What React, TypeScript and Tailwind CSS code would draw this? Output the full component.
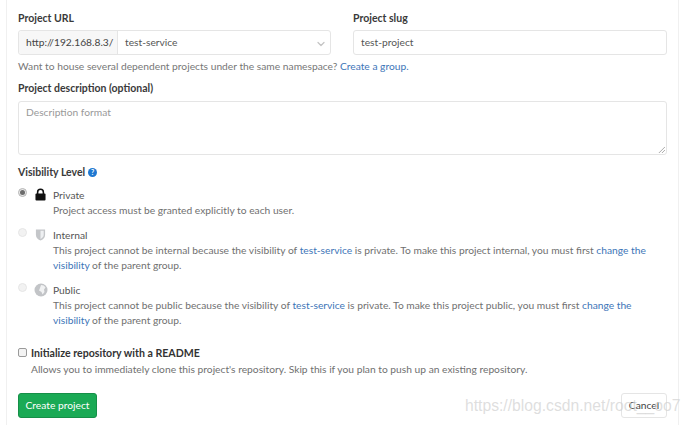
import React from "react";
import { ChevronDown } from "lucide-react";

function LockIcon() {
  return (
    <svg viewBox="0 0 12 13" className="w-[11px] h-[13px]">
      <path d="M2 6V4a4 4 0 0 1 8 0v2H8.300V4a2.300 2.300 0 0 0-4.600 0v2z" fill="#111" />
      <rect x="0.5" y="5.500" width="11" height="7.500" rx="1" fill="#111" />
    </svg>
  );
}

function ShieldIcon() {
  return (
    <svg viewBox="0 0 12 13" className="w-[11px] h-[13px]">
      <path d="M1 1h10v6c0 3-2.500 5-5 6-2.500-1-5-3-5-6z" fill="#c4c6c9" />
      <path d="M6 2.500h3.500V7c0 2-1.800 3.400-3.500 4.300z" fill="#eef0f2" />
    </svg>
  );
}

function GlobeIcon() {
  return (
    <svg viewBox="0 0 14 14" className="w-[14px] h-[14px] -ml-[1px]">
      <circle cx="7" cy="7" r="6.500" fill="#c2c4c7" />
      <path d="M7 2c2 0 3.500.8 4.500 2.500L10 6.500l.5 2.500-2 2.500-1-2.500L5 7.500 6 5z" fill="#f1f2f3" />
    </svg>
  );
}

function Radio({ checked }: { checked?: boolean }) {
  return (
    <span className={`w-[9px] h-[9px] rounded-full border shrink-0 flex items-center justify-center ${checked ? "border-[#b5b5b5] bg-[#e8e8e8]" : "border-[#e6e6e6] bg-[#f2f2f2]"}`}>
      {checked && <span className="w-[5px] h-[5px] rounded-full bg-[#6b6b6b]" />}
    </span>
  );
}

function VisibilityOption({ icon, label, checked, children, className }: {
  icon: React.ReactNode;
  label: string;
  checked?: boolean;
  children: React.ReactNode;
  className?: string;
}) {
  return (
    <div className={`flex ${className ?? ""}`}>
      <div className="w-[17px] shrink-0">
        <Radio checked={checked} />
      </div>
      <div className="w-[18px] shrink-0 flex justify-start">{icon}</div>
      <div className="shrink-0">
        <div className="h-[15px] leading-[15px] text-[#555]">{label}</div>
        <div className="text-[#707070] leading-[15.500px] whitespace-nowrap">{children}</div>
      </div>
    </div>
  );
}

const linkClass = "text-[#3d75b8]";

export default function App() {
  return (
    <div className="relative w-[691px] h-[425px] overflow-hidden bg-white font-['Lato',sans-serif] text-[10.250px]">
      <div className="ml-[6px] w-[673px] h-full border-x border-[#f0f0f0] pl-[11px] pr-[11px] pt-[10px]">
        {/* Project URL and slug */}
        <div className="flex gap-[22px]">
          <div className="w-[313px]">
            <div className="h-[16px] leading-[17px] font-bold text-[10.500px] text-[#3a3a3a]">Project URL</div>
            <div className="mt-[4px] h-[25px] flex border border-[#e5e5e5] rounded-[3px]">
              <div className="w-[99px] bg-[#f7f7f7] border-r border-[#e5e5e5] flex items-center pl-[7px] pt-[1px] text-[#444] rounded-l-[3px]">
                http://192.168.8.3/
              </div>
              <div className="flex-1 flex items-center justify-between pl-[7px] pr-[3px] pt-[1px] text-[#555]">
                <span>test-service</span>
                <ChevronDown className="w-[12px] h-[12px] mt-[1px] text-[#c4c4c4]" strokeWidth={2.500} />
              </div>
            </div>
          </div>
          <div className="w-[314px]">
            <div className="h-[16px] leading-[17px] font-bold text-[10.500px] text-[#3a3a3a]">Project slug</div>
            <div className="mt-[4px] h-[25px] flex items-center border border-[#e5e5e5] rounded-[3px] pl-[7px] pt-[1px] text-[#555]">
              test-project
            </div>
          </div>
        </div>
        <p className="mt-[3px] h-[16px] leading-[16px] text-[#777]">
          Want to house several dependent projects under the same namespace? <span className={linkClass}>Create a group.</span>
        </p>

        {/* Description */}
        <div className="mt-[6px] h-[16px] leading-[17px] font-bold text-[10.500px] text-[#3a3a3a]">Project description (optional)</div>
        <div className="relative mt-[5px] h-[54px] w-[649px] border border-[#e5e5e5] rounded-[3px] pl-[7px] pt-[3px] text-[#999]">
          Description format
          <svg viewBox="0 0 8 8" className="absolute right-[1px] bottom-[1px] w-[7px] h-[7px]">
            <path d="M1 8 8 1M4.500 8 8 4.500" stroke="#888" strokeWidth="0.8" />
          </svg>
        </div>

        {/* Visibility */}
        <div className="mt-[10px] flex items-center gap-[3px] h-[15px] font-bold text-[10.500px] text-[#3a3a3a]">
          Visibility Level
          <span className="w-[9px] h-[9px] rounded-full bg-[#1f78d1] text-white text-[7px] leading-[9px] text-center font-bold">?</span>
        </div>
        <VisibilityOption className="mt-[8px]" icon={<LockIcon />} label="Private" checked>
          Project access must be granted explicitly to each user.
        </VisibilityOption>
        <VisibilityOption className="mt-[9px]" icon={<ShieldIcon />} label="Internal">
          This project cannot be internal because the visibility of <span className={linkClass}>test-service</span> is private. To make this project internal, you must first <span className={linkClass}>change the</span>
          <br />
          <span className={linkClass}>visibility</span> of the parent group.
        </VisibilityOption>
        <VisibilityOption className="mt-[9px]" icon={<GlobeIcon />} label="Public">
          This project cannot be public because the visibility of <span className={linkClass}>test-service</span> is private. To make this project public, you must first <span className={linkClass}>change the</span>
          <br />
          <span className={linkClass}>visibility</span> of the parent group.
        </VisibilityOption>

        {/* README */}
        <div className="mt-[16px] flex items-center h-[16px]">
          <span className="w-[9px] h-[9px] rounded-[2px] border border-[#9a9a9a] bg-[#f3f3f3] mr-[4px]" />
          <span className="font-bold text-[10.600px] leading-[18px] text-[#333]">Initialize repository with a README</span>
        </div>
        <p className="pl-[13px] leading-[16px] text-[#707070]">
          Allows you to immediately clone this project's repository. Skip this if you plan to push up an existing repository.
        </p>

        {/* Actions */}
        <div className="mt-[16px] flex justify-between">
          <button className="w-[79px] h-[25px] pt-[1px] rounded-[3px] bg-[#1aaa55] border border-[#168f48] text-white">Create project</button>
          <button className="w-[46px] h-[25px] pt-[1px] rounded-[3px] bg-white border border-[#e5e5e5] text-[#444]">Cancel</button>
        </div>
      </div>

      {/* Watermark */}
      <div className="absolute left-[465px] top-[396px] font-['Liberation_Sans',sans-serif] text-[15.700px] leading-[20px] text-[#d0d0d0]/70 whitespace-nowrap">
        https://blog.csdn.net/root__oo7
      </div>
    </div>
  );
}
